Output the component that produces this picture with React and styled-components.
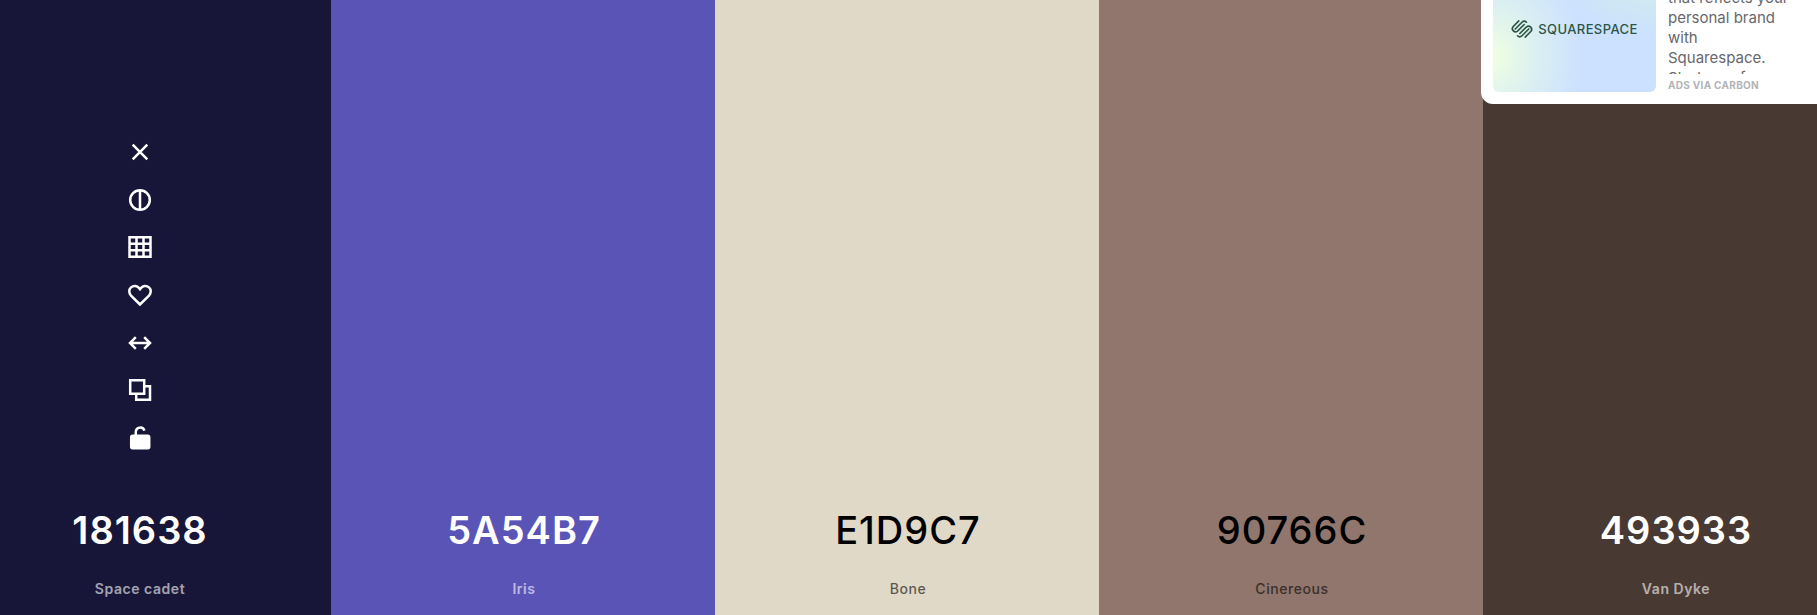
import React from "react";
import styled, { createGlobalStyle } from "styled-components";

const GlobalStyle = createGlobalStyle`
  *, *::before, *::after { box-sizing: border-box; }
  body {
    margin: 0;
    overflow: hidden;
    font-family: Inter, "Liberation Sans", sans-serif;
  }
  button { font: inherit; color: inherit; border: 0; background: none; padding: 0; cursor: pointer; }
`;

const Generator = styled.main`
  overflow: hidden;
`;

/* The strip is wider than the window and bleeds over both of its edges. */
const Palette = styled.div`
  display: flex;
  min-height: 100vh;
  margin: 0 -50px 0 -53px;
`;

const Swatch = styled.section`
  flex: 1 1 0;
  min-width: 0;
  display: flex;
  flex-direction: column;
  align-items: center;
  justify-content: flex-end;
  padding: 0 0 16px 2px;
  background: ${(p) => p.$color};
  color: ${(p) => (p.$dark ? "#fff" : "#000")};
  font-weight: ${(p) => (p.$dark ? 600 : 500)};
`;

const Tools = styled.div`
  display: flex;
  flex-direction: column;
  justify-content: space-between;
  height: 326px;
  margin-bottom: 50px;
`;

const ToolButton = styled.button`
  display: flex;
  align-items: center;
  justify-content: center;
  width: 40px;
  height: 40px;
`;

const HexButton = styled.button`
  margin-bottom: 27px;
  font-size: 38px;
  line-height: 44px;
  letter-spacing: 1px;
`;

const ColorName = styled.div`
  font-size: 14px;
  line-height: 20px;
  letter-spacing: 0.04em;
  opacity: 0.6;
`;

const AdCard = styled.aside`
  position: fixed;
  top: -46px;
  right: 0;
  display: flex;
  gap: 12px;
  width: 336px;
  height: 150px;
  padding: 12px;
  background: #fff;
  border-radius: 12px 0 0 12px;
`;

const AdBanner = styled.a`
  flex: none;
  display: flex;
  align-items: center;
  justify-content: center;
  gap: 5px;
  width: 163px;
  border-radius: 6px;
  color: #2c5545;
  text-decoration: none;
  font-size: 13px;
  font-weight: 500;
  letter-spacing: 0.03em;
  background:
    radial-gradient(ellipse 90px 110px at 0 72%, #f0ffe2 0%, rgba(224, 245, 236, 0.7) 50%, rgba(204, 225, 255, 0) 100%),
    radial-gradient(ellipse 110px 70px at 100% 0, #d4f0e4 0%, rgba(204, 225, 255, 0) 100%),
    #cce1ff;
`;

const AdBody = styled.div`
  display: flex;
  flex-direction: column;
  justify-content: flex-end;
  width: 128px;
`;

const AdText = styled.a`
  flex: none;
  height: 86px;
  overflow: hidden;
  color: #67676c;
  text-decoration: none;
  font-size: 15px;
  line-height: 20px;
`;

const AdSource = styled.a`
  padding-top: 4px;
  color: #b3b3b6;
  text-decoration: none;
  font-size: 10px;
  font-weight: 700;
  line-height: 14px;
  letter-spacing: 0.03em;
`;

const Glyph = styled.svg`
  flex: none;
  overflow: visible;
`;

const Icon = ({ children }) => (
  <Glyph
    width="24"
    height="24"
    viewBox="0 0 24 24"
    fill="none"
    stroke="currentColor"
    strokeWidth="2.5"
    aria-hidden="true"
  >
    {children}
  </Glyph>
);

const SquarespaceMark = () => (
  <Glyph
    width="22"
    height="22"
    viewBox="0 0 24 24"
    fill="none"
    stroke="currentColor"
    strokeWidth="1.8"
    strokeLinecap="round"
    aria-hidden="true"
  >
    <path d="M9.600 16.900L16.900 9.600a3.500 3.500 0 0 1 4.900 4.900L15.500 20.800" />
    <path d="M19.400 12L12 19.400a3.500 3.500 0 0 1-4.900 0" />
    <path d="M16.900 4.600a3.500 3.500 0 0 0-4.900 0L4.600 12" />
    <path d="M14.400 7.100L7.100 14.400a3.500 3.500 0 0 1-4.900-4.900L8.500 3.200" />
  </Glyph>
);

const tools = [
  { label: "Remove color", icon: <Icon><path d="M4.7 4.7l14.6 14.6M19.3 4.7L4.7 19.3" /></Icon> },
  { label: "Check contrast", icon: <Icon><circle cx="12" cy="12" r="9.8" /><path d="M12 2v20" /></Icon> },
  { label: "View shades", icon: <Icon><path d="M1.500 2.200h21v19.600h-21zM8.500 2v20M15.500 2v20M1.500 8.700h21M1.500 15.300h21" /></Icon> },
  {
    label: "Save color",
    icon: (
      <Icon>
        <path d="M12 21.500L3 12.600C.6 10 .8 6.400 3 4.400c2.500-2.200 6.200-1.800 8 .6l1 1.300 1-1.300c1.800-2.400 5.500-2.800 8-.6 2.200 2 2.400 5.600 0 8.200z" />
      </Icon>
    ),
  },
  { label: "Drag color", icon: <Icon><path d="M2 12h20M7.800 6.200L2 12l5.800 5.800M16.200 6.200L22 12l-5.800 5.800" /></Icon> },
  { label: "Copy hex", icon: <Icon><path d="M2.200 2.300h14v13.400h-14zM16.200 8.300h5.800v13.400H8.200v-6" /></Icon> },
  {
    label: "Lock color",
    icon: (
      <Icon>
        <path d="M7.800 9.500V6a4.400 4.400 0 0 1 8.600-1.300" />
        <rect x="3.200" y="9.700" width="18" height="12.600" rx="1.500" fill="currentColor" />
      </Icon>
    ),
  },
];

const colors = [
  { hex: "181638", name: "Space cadet", dark: true, active: true },
  { hex: "5A54B7", name: "Iris", dark: true },
  { hex: "E1D9C7", name: "Bone", dark: false },
  { hex: "90766C", name: "Cinereous", dark: false },
  { hex: "493933", name: "Van Dyke", dark: true },
];

export default function App() {
  return (
    <>
      <GlobalStyle />
      <Generator>
        <Palette>
          {colors.map((c) => (
            <Swatch key={c.hex} $color={`#${c.hex}`} $dark={c.dark}>
              {c.active && (
                <Tools>
                  {tools.map((t) => (
                    <ToolButton key={t.label} type="button" aria-label={t.label}>
                      {t.icon}
                    </ToolButton>
                  ))}
                </Tools>
              )}
              <HexButton type="button">{c.hex}</HexButton>
              <ColorName>{c.name}</ColorName>
            </Swatch>
          ))}
        </Palette>
      </Generator>
      <AdCard>
        <AdBanner href="#squarespace">
          <SquarespaceMark />
          SQUARESPACE
        </AdBanner>
        <AdBody>
          <AdText href="#squarespace">
            that reflects your personal brand with Squarespace. Start now for
          </AdText>
          <AdSource href="#carbon">ADS VIA CARBON</AdSource>
        </AdBody>
      </AdCard>
    </>
  );
}
